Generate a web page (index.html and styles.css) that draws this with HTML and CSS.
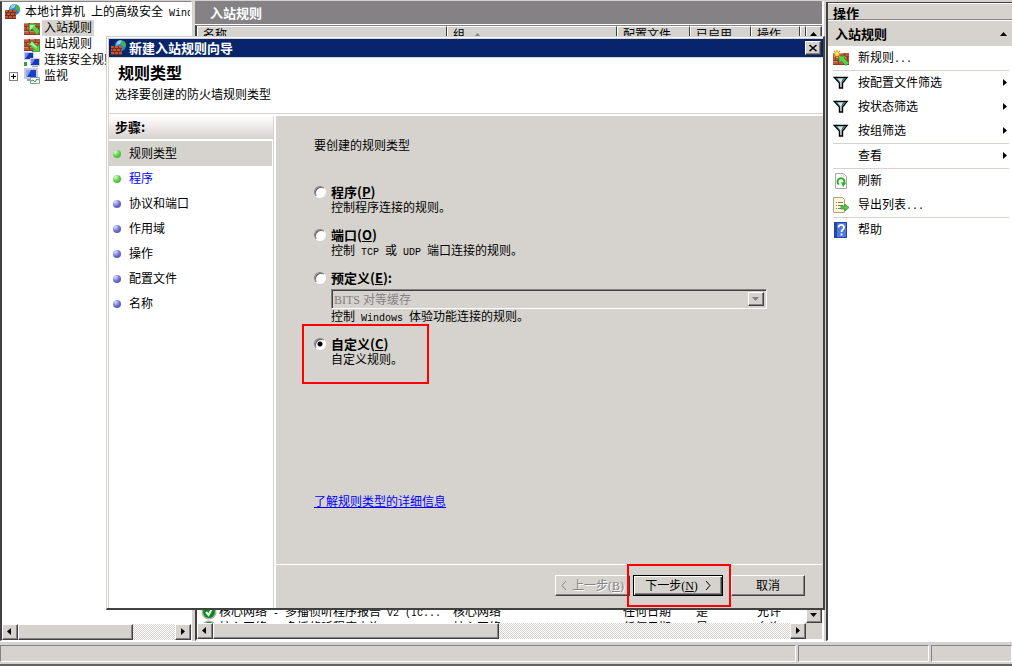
FILE: index.html
```html
<!DOCTYPE html>
<html lang="zh-CN">
<head>
    <meta charset="UTF-8">
    <meta name="viewport" content="width=device-width, initial-scale=1.0">
    <title>高级安全 Windows 防火墙</title>
    <link rel="stylesheet" href="styles.css">
</head>
<body>

    <!-- shared icons -->
    <svg class="icon-defs" width="0" height="0" aria-hidden="true">
        <symbol id="bricks" viewBox="0 0 16 16">
            <path fill="#8e3a24" d="M0 3h16v12H0z"/>
            <path fill="#b9583c" d="M0 3h5v3H0zM6 3h5v3H6zM12 3h4v3h-4zM0 7h2v3H0zM3 7h5v3H3zM9 7h5v3H9zM15 7h1v3h-1zM0 11h5v3H0zM6 11h5v3H6zM12 11h4v3h-4z"/>
            <path fill="#d98a6c" d="M0 3h4v1H0zM6 3h4v1H6zM3 7h4v1H3zM9 7h4v1H9zM0 11h4v1H0zM6 11h4v1H6z"/>
        </symbol>
        <symbol id="firewall" viewBox="0 0 16 16">
            <circle cx="9.500" cy="5.500" r="5.500" fill="#2f7fd0"/>
            <path fill="#8fd0f4" d="M6 2c2-2 4-2 5-1L9 4 5 5z"/>
            <path fill="#45b83c" d="M11 1c3 0 4 3 4 5l-2 1-3-2zM5 5l3 1-1 3-3-1z"/>
            <path fill="#7c2d1a" d="M0 6h11v9H0z"/>
            <path fill="#b9583c" d="M0 6h3v2H0zM4 6h3v2H4zM8 6h3v2H8zM0 9h1v2H0zM2 9h3v2H2zM6 9h3v2H6zM10 9h1v2h-1zM0 12h3v2H0zM4 12h3v2H4zM8 12h3v2H8z"/>
        </symbol>
        <symbol id="inbound" viewBox="0 0 16 16">
            <use href="#bricks"/>
            <path fill="#5cd048" stroke="#2c8a26" stroke-width=".7" d="M5 4h8l-2 2 5 5-3 4-5-6-3 3z"/>
            <path fill="#b5f2a6" d="M6 5h5l-5 5z"/>
        </symbol>
        <symbol id="outbound" viewBox="0 0 16 16">
            <use href="#bricks"/>
            <path fill="#5cd048" stroke="#2c8a26" stroke-width=".7" d="M15.500 15.500H8l2-2-5-5 3-4 5 6 2.500-3z"/>
            <path fill="#b5f2a6" d="M8 6l5 5-1 1-6-4z"/>
        </symbol>
        <symbol id="computers" viewBox="0 0 16 16">
            <path fill="#c9d2e4" d="M0 0h10v8H0z"/>
            <path fill="#1c35b8" d="M1 1h8v6H1z"/>
            <path fill="#6c8cf0" d="M1 1h4L2 6H1z"/>
            <path fill="#c9d2e4" d="M6 6h10v8H6z"/>
            <path fill="#1c35b8" d="M7 7h8v6H7z"/>
            <path fill="#6c8cf0" d="M7 7h4l-3 5H7z"/>
            <path fill="#9aa3b5" d="M8 14h6v1H8z"/>
            <path fill="#35a52e" d="M0 10h3v4H0z"/>
        </symbol>
        <symbol id="monitor" viewBox="0 0 16 16">
            <path fill="#c3c9d8" d="M0 0h14v11H0z"/>
            <path fill="#1c3fc4" d="M2 2h10v7H2z"/>
            <path fill="#86a7f5" d="M2 2h5L3 9H2z"/>
            <path fill="#9aa3b5" d="M3 11h6v2H3z"/>
            <path fill="#fff" stroke="#8a97a8" d="M6.500 9.500h9v6h-9z"/>
            <path fill="none" stroke="#2aa52a" d="M7 13l2-1 2 2 2-3 2 1"/>
        </symbol>
        <symbol id="new-rule" viewBox="0 0 16 16">
            <use href="#bricks"/>
            <path fill="#5cd048" stroke="#2c8a26" stroke-width=".7" d="M6 6h7l-2 2 5 5-2 2h-2L8.500 11 6 13z"/>
            <path stroke="#f0a010" stroke-width="1.200" d="M4 0v8M0 4h8M1 1l6 6M7 1L1 7"/>
            <circle cx="4" cy="4" r="2" fill="#ffe070"/>
        </symbol>
        <symbol id="funnel" viewBox="0 0 16 16">
            <path fill="#dfe7ea" stroke="#000" stroke-width="1.400" d="M1.500 2.500h12.500L9.500 8v5h-3V8z"/>
            <path fill="#128080" d="M10.500 3h2.500L9 7.500V5zM2.500 3h1.500l3 4v1z"/>
            <path fill="#9a9a9a" d="M8 6h1v6H8z"/>
        </symbol>
        <symbol id="refresh" viewBox="0 0 16 16">
            <path fill="#fff" stroke="#a8a8a8" d="M2.500.500h8l3 3v12h-11z"/>
            <path fill="#ddd" d="M10 1v3h3z"/>
            <path fill="none" stroke="#2fae2b" stroke-width="2" d="M6 11.500a3.500 3.500 0 1 1 4 0"/>
            <path fill="#2fae2b" d="M8 9l5 1-3 4z"/>
        </symbol>
        <symbol id="export" viewBox="0 0 16 16">
            <path fill="#fdf7d8" stroke="#a9a58c" d="M.500.500h9l2 2v13h-11z"/>
            <path stroke="#7c7c74" d="M3 5.500h1M5 5.500h5M3 8.500h1M5 8.500h5M3 11.500h1M5 11.500h5"/>
            <path fill="#55c844" stroke="#299024" stroke-width=".7" d="M8 9h4V7l4 3.500-4 3.500v-2H8z"/>
        </symbol>
        <symbol id="help" viewBox="0 0 16 16">
            <path fill="#2147a8" d="M1 0h13v16H1z"/>
            <path fill="#4f78dc" d="M4 1h9v14H4z"/>
            <path fill="none" stroke="#fff" stroke-width="1.800" d="M5.500 5.500c0-3.500 5.500-3.500 5.500 0 0 2-2.500 2-2.500 4.500M8.500 11.500v2"/>
        </symbol>
        <symbol id="enabled" viewBox="0 0 16 16">
            <circle cx="8" cy="8" r="7.500" fill="#b0b0b0"/>
            <circle cx="8" cy="8" r="6" fill="#0b8c16"/>
            <path fill="none" stroke="#fff" stroke-width="2" d="M5 8l2.500 3L11 4.500"/>
        </symbol>
        <symbol id="tri-up" viewBox="0 0 8 8"><path d="M0 6h7L3.500 2z"/></symbol>
        <symbol id="tri-down" viewBox="0 0 8 8"><path d="M0 2h7L3.500 6z"/></symbol>
        <symbol id="tri-left" viewBox="0 0 8 8"><path d="M5 0v7L1 3.500z"/></symbol>
        <symbol id="tri-right" viewBox="0 0 8 8"><path d="M2 0v7l4-3.500z"/></symbol>
    </svg>

    <div class="console">

        <nav class="tree-pane">
            <ul class="tree">
                <li class="root"><svg class="icon"><use href="#firewall"/></svg><span>本地计算机<code> </code>上的高级安全<code> Windows </code>防火墙</span></li>
                <li><i></i><svg class="icon"><use href="#inbound"/></svg><span class="selected">入站规则</span></li>
                <li><i></i><svg class="icon"><use href="#outbound"/></svg><span>出站规则</span></li>
                <li><i></i><svg class="icon"><use href="#computers"/></svg><span>连接安全规则</span></li>
                <li><i class="expand"></i><svg class="icon"><use href="#monitor"/></svg><span>监视</span></li>
            </ul>
            <div class="scrollbar">
                <button type="button" aria-label="向左"><svg><use href="#tri-left"/></svg></button>
                <div class="thumb tree-thumb"></div>
                <div class="track"></div>
                <button type="button" aria-label="向右"><svg><use href="#tri-right"/></svg></button>
            </div>
        </nav>

        <main class="rules-pane">
            <h2>入站规则</h2>
            <div class="list">
                <div class="list-view">
                    <div class="rows">
                        <table>
                            <colgroup>
                                <col class="col-name"><col class="col-group"><col class="col-profile"><col class="col-enabled"><col class="col-action"><col>
                            </colgroup>
                            <thead>
                                <tr><th>名称</th><th>组 <svg class="sort"><use href="#tri-up"/></svg></th><th>配置文件</th><th>已启用</th><th>操作</th><th></th></tr>
                            </thead>
                            <tbody>
                                <tr class="space"><td colspan="6"></td></tr>
                                <tr><td><div class="rule"><svg class="icon"><use href="#enabled"/></svg><span>核心网络<code> - </code>多播侦听程序报告<code> v2 (IC...</code></span></div></td><td>核心网络</td><td>任何日期</td><td>是</td><td>允许</td><td></td></tr>
                                <tr><td><div class="rule"><svg class="icon"><use href="#enabled"/></svg><span>核心网络<code> - </code>多播侦听程序查询</span></div></td><td>核心网络</td><td>任何日期</td><td>是</td><td>允许</td><td></td></tr>
                            </tbody>
                        </table>
                    </div>
                    <div class="scrollbar vertical">
                        <button type="button" aria-label="向上"><svg><use href="#tri-up"/></svg></button>
                        <div class="track"></div>
                        <button type="button" aria-label="向下"><svg><use href="#tri-down"/></svg></button>
                    </div>
                </div>
                <div class="scrollbar list-scroll">
                    <button type="button" aria-label="向左"><svg><use href="#tri-left"/></svg></button>
                    <div class="thumb list-thumb"></div>
                    <div class="track"></div>
                    <button type="button" aria-label="向右"><svg><use href="#tri-right"/></svg></button>
                </div>
            </div>
        </main>

        <aside class="actions-pane">
            <h2>操作</h2>
            <h3>入站规则 <svg class="mark-arrow"><use href="#tri-up"/></svg></h3>
            <ul class="actions">
                <li><svg class="icon"><use href="#new-rule"/></svg><span>新规则<code>...</code></span></li>
                <li class="line"><svg class="icon"><use href="#funnel"/></svg><span>按配置文件筛选</span><svg class="mark-arrow"><use href="#tri-right"/></svg></li>
                <li><svg class="icon"><use href="#funnel"/></svg><span>按状态筛选</span><svg class="mark-arrow"><use href="#tri-right"/></svg></li>
                <li><svg class="icon"><use href="#funnel"/></svg><span>按组筛选</span><svg class="mark-arrow"><use href="#tri-right"/></svg></li>
                <li class="line"><span class="icon"></span><span>查看</span><svg class="mark-arrow"><use href="#tri-right"/></svg></li>
                <li class="line"><svg class="icon"><use href="#refresh"/></svg><span>刷新</span></li>
                <li><svg class="icon"><use href="#export"/></svg><span>导出列表<code>...</code></span></li>
                <li class="line"><svg class="icon"><use href="#help"/></svg><span>帮助</span></li>
            </ul>
        </aside>
    </div>

    <footer class="status-bar">
        <div></div>
        <div></div>
        <div></div>
    </footer>

    <form class="wizard">
        <div class="title-bar">
            <svg class="icon"><use href="#firewall"/></svg>
            <span>新建入站规则向导</span>
            <button type="button" class="close" aria-label="关闭"><svg viewBox="0 0 8 8"><path fill="none" stroke="#000" stroke-width="1.600" d="M0 0l8 7M8 0L0 7"/></svg></button>
        </div>
        <header>
            <h1>规则类型</h1>
            <p>选择要创建的防火墙规则类型</p>
        </header>
        <div class="wizard-body">
            <div class="steps">
                <h2>步骤:</h2>
                <ol>
                    <li class="done current">规则类型</li>
                    <li class="done"><a href="#">程序</a></li>
                    <li>协议和端口</li>
                    <li>作用域</li>
                    <li>操作</li>
                    <li>配置文件</li>
                    <li>名称</li>
                </ol>
            </div>
            <div class="page">
                <div class="content">
                    <p class="question">要创建的规则类型</p>
                    <div class="options">
                        <div class="option">
                            <input type="radio" name="ruleType" id="typeProgram">
                            <label for="typeProgram">程序(<u>P</u>)</label>
                            <p>控制程序连接的规则。</p>
                        </div>
                        <div class="option">
                            <input type="radio" name="ruleType" id="typePort">
                            <label for="typePort">端口(<u>O</u>)</label>
                            <p>控制<code> TCP </code>或<code> UDP </code>端口连接的规则。</p>
                        </div>
                        <div class="option">
                            <input type="radio" name="ruleType" id="typePredefined">
                            <label for="typePredefined">预定义(<u>E</u>):</label>
                            <div class="select-box">
                                <select aria-label="预定义" disabled><option>BITS 对等缓存</option></select>
                                <span class="drop"><svg><use href="#tri-down"/></svg></span>
                            </div>
                            <p>控制<code> Windows </code>体验功能连接的规则。</p>
                        </div>
                        <div class="option highlight">
                            <input type="radio" name="ruleType" id="typeCustom" checked>
                            <label for="typeCustom">自定义(<u>C</u>)</label>
                            <p>自定义规则。</p>
                        </div>
                    </div>
                    <a class="more" href="#">了解规则类型的详细信息</a>
                </div>
                <div class="buttons">
                    <button type="button" class="back" disabled>
                        <svg viewBox="0 0 6 9"><path d="M5 0L1 4.500 5 9"/></svg>上一步(<u>B</u>)
                    </button>
                    <div class="highlight">
                        <button type="submit" class="next">下一步(<u>N</u>) <svg viewBox="0 0 6 9"><path d="M1 0l4 4.500L1 9"/></svg></button>
                    </div>
                    <button type="button" class="cancel">取消</button>
                </div>
            </div>
        </div>
    </form>

</body>
</html>
```
FILE: styles.css
```css
*, *::before {
    box-sizing: border-box;
}
body {
    margin: 0;
    height: 100vh;
    display: flex;
    flex-direction: column;
    position: relative;
    overflow: hidden;
    background-color: #d6d3ce;
    color: #000;
    font-family: "Liberation Serif", "Noto Sans CJK SC", serif;
    font-size: 12px;
    line-height: 16px;
}
h1, h2, h3, p, ul, ol {
    margin: 0;
    padding: 0;
}
h1, h2, h3, label, .title-bar {
    font-family: "Noto Sans CJK SC", sans-serif;
    font-size: 13px;
    font-weight: bold;
}
ul, ol {
    list-style: none;
}
/* half-width latin text between the chinese characters */
code {
    font-family: "Liberation Mono", monospace;
    font-size: 10px;
    line-height: 12px;
    white-space: pre;
}
button, select {
    font: inherit;
    color: inherit;
    padding: 0;
    border-radius: 0;
}
.icon-defs {
    position: absolute;
}
.icon {
    width: 16px;
    height: 16px;
    flex: none;
}

/* console */
.console {
    flex: 1;
    min-height: 0;
    display: flex;
    padding-top: 1px;
}
.tree-pane {
    width: 192px;
    display: flex;
    flex-direction: column;
    background-color: #fff;
    border: 1px solid #848284;
    border-left: 2px solid #424142;
    border-right-color: #fff;
    border-bottom-color: #fff;
    overflow: hidden;
    padding-top: 2px;
}
.tree {
    flex: 1;
    white-space: nowrap;
    overflow: hidden;
    margin-right: 1px;
}
.tree li {
    display: flex;
    align-items: center;
    height: 16px;
    padding-left: 6px;
}
.tree li.root {
    padding-left: 3px;
}
.tree span {
    padding: 0 2px;
    margin-left: 2px;
}
.tree .selected {
    background-color: #d6d3ce;
}
.tree i {
    width: 10px;
    height: 9px;
    margin-right: 6px;
}
.tree .expand {
    width: 9px;
    margin-left: 1px;
    border: 1px solid #848284;
    background: linear-gradient(#000, #000) center / 5px 1px no-repeat, linear-gradient(#000, #000) center / 1px 5px no-repeat;
}

/* scroll bars */
.scrollbar {
    display: flex;
    height: 16px;
    flex: none;
}
.scrollbar.vertical {
    flex-direction: column;
    width: 16px;
    height: auto;
}
.scrollbar button, .thumb, .drop, .close {
    background-color: #d6d3ce;
    border: 1px solid #fff;
    border-right-color: #424142;
    border-bottom-color: #424142;
    box-shadow: inset -1px -1px #848284;
}
.scrollbar button {
    width: 16px;
    height: 16px;
    display: flex;
    align-items: center;
    justify-content: center;
    flex: none;
}
.scrollbar svg, .drop svg, .mark-arrow, .sort {
    width: 8px;
    height: 8px;
}
.track {
    flex: 1;
    background: repeating-conic-gradient(#fff 0 25%, #d6d3ce 0 50%) 0 0 / 2px 2px;
}
.tree-thumb {
    width: 115px;
}
.list-thumb {
    width: 286px;
}

/* rules list */
.rules-pane {
    flex: 1;
    min-width: 0;
    margin-left: 3px;
    margin-right: 2px;
    display: flex;
    flex-direction: column;
    border-right: 2px solid #fff;
}
.rules-pane h2 {
    height: 24px;
    line-height: 24px;
    padding-left: 15px;
    color: #fff;
    background-color: #848284;
    border-bottom: 1px solid #fff;
}
.list {
    flex: 1;
    min-height: 0;
    display: flex;
    flex-direction: column;
    border: 1px solid #848284;
    border-left: 2px solid #424142;
    border-right: none;
    border-bottom: 2px solid #fff;
}
.list-view {
    flex: 1;
    min-height: 0;
    display: flex;
    background-color: #fff;
}
.rows {
    flex: 1;
    min-width: 0;
    overflow: hidden;
}
table {
    width: 100%;
    height: calc(100% + 13px);
    table-layout: fixed;
    border-collapse: separate;
    border-spacing: 0;
    white-space: nowrap;
}
.col-name {
    width: 250px;
}
.col-group {
    width: 170px;
}
.col-profile {
    width: 73px;
}
.col-enabled {
    width: 61px;
}
.col-action {
    width: 49px;
}
th {
    height: 18px;
    padding: 0 5px;
    text-align: left;
    font-weight: normal;
    background-color: #d6d3ce;
    border: 1px solid #fff;
    border-right-color: #424142;
    border-bottom-color: #424142;
}
.sort {
    margin-left: 6px;
    fill: #848284;
}
td {
    height: 16px;
    padding: 0 6px;
    overflow: hidden;
}
tr.space td {
    height: auto;
}
.rule {
    display: flex;
    gap: 2px;
    height: 16px;
    margin-left: -2px;
}
.list-scroll {
    padding-right: 16px;
}

/* actions */
.actions-pane {
    width: 186px;
    background-color: #fff;
    border: 2px solid #424142;
    border-top-width: 1px;
    border-right: none;
    border-bottom: 1px solid #fff;
    margin-top: 1px;
}
.actions-pane h2 {
    height: 17px;
    line-height: 17px;
    padding-left: 5px;
    background-color: #d6d3ce;
    border-top: 1px solid #fff;
    border-bottom: 1px solid #848284;
}
.actions-pane h3 {
    display: flex;
    align-items: center;
    justify-content: space-between;
    height: 25px;
    margin-top: 1px;
    padding: 0 4px 0 7px;
    background-color: #d6d3ce;
}
.actions {
    padding: 0 3px 0 5px;
}
.actions li {
    display: flex;
    align-items: center;
    height: 24px;
}
.actions li.line {
    height: 25px;
    border-top: 1px solid #d6d3ce;
}
.actions li span:not(.icon) {
    flex: 1;
    margin-left: 9px;
}

/* status bar */
.status-bar {
    height: 25px;
    padding: 3px 0 2px;
    display: flex;
    gap: 2px;
    border-top: 1px solid #fff;
    border-bottom: 2px solid #636163;
}
.status-bar div {
    width: 131px;
    border: 1px solid #848284;
    border-right-color: #fff;
    border-bottom-color: #fff;
}
.status-bar div:first-child {
    flex: 1;
}
.status-bar div:last-child {
    width: 81px;
}

/* wizard window, floats above the console */
.wizard {
    position: absolute;
    top: 36px;
    right: 187px;
    bottom: 56px;
    left: 106px;
    display: flex;
    flex-direction: column;
    padding: 1px 0 0 2px;
    background-color: #d6d3ce;
    border: 1px solid #d6d3ce;
    border-right: 2px solid #424142;
    border-bottom: 2px solid #424142;
    box-shadow: inset 1px 1px #fff;
}
.title-bar {
    display: flex;
    align-items: center;
    height: 19px;
    padding: 0 2px;
    color: #fff;
    background-color: #08246b;
    border-top: 1px solid #d6d3ce;
}
.title-bar span {
    flex: 1;
    margin-left: 2px;
}
.close {
    width: 16px;
    height: 14px;
    display: flex;
    align-items: center;
    justify-content: center;
}
.close svg {
    width: 8px;
    height: 7px;
    overflow: visible;
}
.wizard header {
    height: 57px;
    padding: 4px 6px;
    background-color: #fff;
    border-top: 1px solid #d6d3ce;
    border-bottom: 1px solid #d6d3ce;
}
.wizard h1 {
    font-size: 16px;
    line-height: 20px;
    padding-left: 3px;
}
.wizard header p {
    margin-top: 5px;
}
.wizard-body {
    flex: 1;
    min-height: 0;
    display: flex;
    border-top: 2px solid #fff;
}
.steps {
    width: 167px;
    background-color: #fff;
    box-shadow: inset -2px 0 #fff, inset -3px 0 #d6d3ce;
    padding-right: 3px;
}
.steps h2 {
    height: 23px;
    line-height: 22px;
    padding-left: 6px;
    background: linear-gradient(#fff, #e9e2e2 60%, #d6d3ce);
}
.steps ol {
    padding: 2px 1px 0 0;
}
.steps li {
    display: flex;
    align-items: center;
    height: 25px;
    padding-left: 4px;
}
.steps li::before {
    content: "";
    width: 8px;
    height: 8px;
    margin-right: 8px;
    border-radius: 50%;
    background: radial-gradient(circle at 30% 25%, #dcdcff, #6666cc 55%, #5252b8);
}
.steps li.done::before {
    background: radial-gradient(circle at 30% 25%, #d8ffd0, #52c83c 55%, #3cae2a);
}
.steps li.current {
    background-color: #d6d3ce;
}
.steps a {
    color: #00f;
    text-decoration: none;
}
.page {
    flex: 1;
    min-width: 0;
    display: flex;
    flex-direction: column;
}
.content {
    flex: 1;
    padding: 22px 56px 0 38px;
}
.options {
    display: flex;
    flex-direction: column;
    gap: 11px;
    margin-top: 30px;
}
.option {
    display: grid;
    grid-template-columns: 17px 1fr;
    align-items: center;
    position: relative;
}
.option p, .select-box {
    grid-column: 2;
}
label {
    line-height: 16px;
}
input[type="radio"] {
    appearance: none;
    width: 12px;
    height: 12px;
    margin: 0;
    border: 1px solid #848284;
    border-right-color: #fff;
    border-bottom-color: #fff;
    border-radius: 50%;
    background-color: #fff;
    box-shadow: inset 1px 1px #636163;
}
input[type="radio"]:checked {
    background: radial-gradient(circle, #000 2px, #fff 3px);
}
.select-box {
    display: flex;
    height: 20px;
    margin-top: 3px;
    border: 1px solid #848284;
    border-right-color: #fff;
    border-bottom-color: #fff;
    box-shadow: inset 1px 1px #424142;
    padding: 2px;
}
.select-box select {
    appearance: none;
    flex: 1;
    border: none;
    background: none;
    color: #848284;
    opacity: 1;
}
.drop {
    width: 16px;
    display: flex;
    align-items: center;
    justify-content: center;
}
.drop svg {
    fill: #848284;
}
/* red frame around the choices to make */
.highlight::before {
    content: "";
    position: absolute;
    border: 2px solid #f00;
    pointer-events: none;
}
.option.highlight::before {
    top: -12px;
    left: -12px;
    width: 127px;
    height: 60px;
}
.more {
    display: inline-block;
    margin-top: 126px;
    color: #00f;
}
.buttons {
    display: flex;
    justify-content: flex-end;
    align-items: center;
    height: 44px;
    margin-right: 1px;
    padding: 0 17px 2px 0;
    border-top: 1px solid #fff;
}
.buttons button {
    height: 21px;
    background-color: #d6d3ce;
    border: 1px solid #fff;
    border-right-color: #424142;
    border-bottom-color: #424142;
    box-shadow: inset -1px -1px #848284;
}
.buttons svg {
    width: 6px;
    height: 9px;
    fill: none;
    stroke: currentColor;
}
.buttons .back {
    width: 75px;
    color: #848284;
    text-shadow: 1px 1px #fff;
}
.buttons .back svg {
    margin-right: 5px;
}
.buttons .highlight {
    position: relative;
    padding: 0 8px 0 3px;
}
.buttons .highlight::before {
    top: -11px;
    right: 0;
    bottom: -11px;
    left: -3px;
}
.buttons .next {
    width: 90px;
    border: 1px solid #000;
    box-shadow: inset 1px 1px #fff, inset -1px -1px #424142, inset -2px -2px #848284;
}
.buttons .next svg {
    margin-left: 4px;
}
.buttons .cancel {
    width: 74px;
}
```
